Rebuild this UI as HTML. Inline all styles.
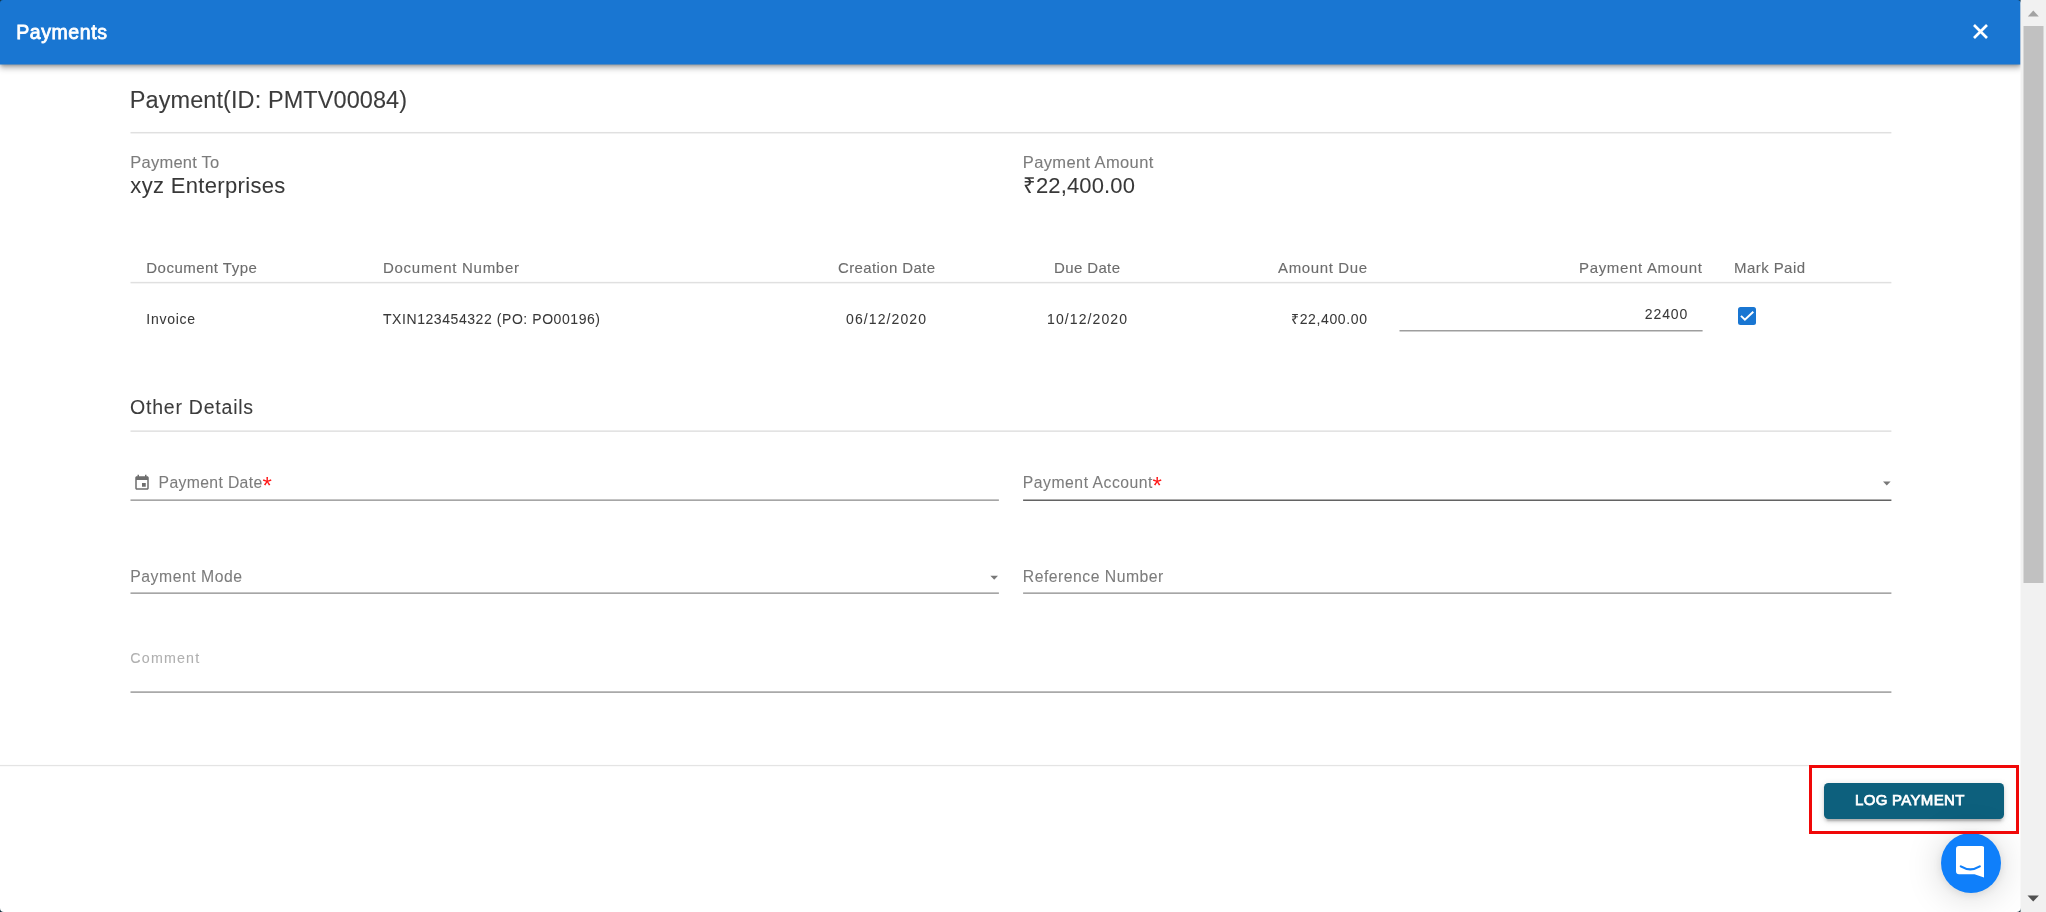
<!DOCTYPE html>
<html lang="en">
<head>
<meta charset="utf-8">
<title>Payments</title>
<style>
html,body{margin:0;padding:0;overflow:hidden;}
body{width:2046px;height:912px;overflow:hidden;background:#fff;position:relative;
  font-family:"Liberation Sans",sans-serif;-webkit-font-smoothing:antialiased;}
.t{position:absolute;white-space:nowrap;line-height:1;filter:blur(0.5px);-webkit-text-stroke:0.3px;}
.abs{position:absolute;}
/* header bar */
#bar{position:absolute;left:0;top:0;width:2021px;height:65px;z-index:5;}
#barbg{position:absolute;left:0;top:0;width:2021px;height:65px;background:#1976d2;transform:translate(-0.5px,-0.5px);
  box-shadow:0 3px 6px rgba(0,0,0,.30),0 1px 3px rgba(0,0,0,.20);}
/* scrollbar */
#sb{position:absolute;left:2021px;top:0;width:26px;height:912px;background:#f1f1f1;z-index:6;transform:translateX(-0.5px);}
#sb .thumb{position:absolute;left:3.3px;top:25.6px;width:19.4px;height:557.4px;background:#c1c1c1;}
#sb svg{position:absolute;left:0;}
/* footer */
#redbox{position:absolute;left:1809.2px;top:765.2px;width:203.5px;height:63.3px;border:3px solid #f00808;z-index:4;}
#btn{position:absolute;left:1824px;top:783px;width:180px;height:36px;background:#0d607d;border-radius:4.5px;border:0;padding:0;margin:0;font-family:inherit;
  box-shadow:0 4.5px 1.5px -3px rgba(0,0,0,.14),0 3px 3px 0 rgba(0,0,0,.12),0 1.5px 7.5px 0 rgba(0,0,0,.12);}
#chat{position:absolute;left:1941px;top:833px;width:60px;height:60px;border-radius:50%;background:#0f7ffa;
  box-shadow:0 1.5px 9px rgba(0,0,0,.09),0 3px 36px rgba(0,0,0,.17);}
</style>
</head>
<body>

<!-- dialog title bar -->
<header id="bar">
  <div id="barbg"></div>
  <div class="t" style="left:16.2px;top:22.79px;font-size:19.5px;letter-spacing:0.58px;color:#fff;-webkit-text-stroke:0.8px #fff">Payments</div>
  <svg class="abs" style="left:1971px;top:22px" width="19" height="19" viewBox="0 0 19 19"><path d="M3 3 L16 16 M16 3 L3 16" stroke="#fff" stroke-width="2.7" fill="none"/></svg>
</header>

<main>

<!-- rules and underlines -->
<svg class="abs" style="left:0;top:0" width="2021" height="912" viewBox="0 0 2021 912">
  <!-- section rules -->
  <rect x="130.5" y="131.95" width="1760.9" height="1.5" fill="#e0e0e0"/>
  <rect x="130.5" y="281.85" width="1760.9" height="1.5" fill="#e0e0e0"/>
  <rect x="130.5" y="430.4" width="1760.9" height="1.5" fill="#e0e0e0"/>
  <!-- field underlines -->
  <rect x="1399.5" y="330.0" width="303.1" height="1.5" fill="#9e9e9e"/>
  <rect x="130.5" y="499.45" width="868.4" height="1.38" fill="#949494"/>
  <rect x="1023.1" y="499.5" width="868.3" height="1.45" fill="#5c5c5c"/>
  <rect x="130.5" y="592.45" width="868.4" height="1.38" fill="#949494"/>
  <rect x="1023.1" y="592.45" width="868.3" height="1.38" fill="#949494"/>
  <rect x="130.5" y="691.4" width="1760.9" height="1.4" fill="#949494"/>
  <!-- footer divider -->
  <rect x="0" y="764.9" width="1809.5" height="1.3" fill="#e4e4e4"/>
</svg>

<section>
<!-- payment summary -->
<div class="t" style="left:129.8px;top:89.11px;font-size:23.5px;letter-spacing:0.08px;color:#3c3c3c;-webkit-text-stroke:0.08px">Payment(ID: PMTV00084)</div>

<div class="t" style="left:130.3px;top:153.93px;font-size:16.5px;letter-spacing:0.23px;color:#7c7c7c;-webkit-text-stroke:0.1px">Payment To</div>
<div class="t" style="left:130.3px;top:174.68px;font-size:22px;letter-spacing:0.329px;color:#383838;-webkit-text-stroke:0.05px">xyz Enterprises</div>
<div class="t" style="left:1022.8px;top:153.93px;font-size:16.5px;letter-spacing:0.373px;color:#7c7c7c;-webkit-text-stroke:0.1px">Payment Amount</div>
<div class="t" style="left:1022.8px;top:174.68px;font-size:22px;letter-spacing:0.136px;color:#383838;-webkit-text-stroke:0.05px">₹22,400.00</div>

</section>

<section>
<!-- documents table -->
<div class="t" style="left:146.3px;top:259.5px;font-size:15px;letter-spacing:0.477px;color:#6c6c6c;-webkit-text-stroke:0.12px">Document Type</div>
<div class="t" style="left:383px;top:259.5px;font-size:15px;letter-spacing:0.722px;color:#6c6c6c;-webkit-text-stroke:0.12px">Document Number</div>
<div class="t" style="left:838px;top:259.5px;font-size:15px;letter-spacing:0.37px;color:#6c6c6c;-webkit-text-stroke:0.12px">Creation Date</div>
<div class="t" style="left:1054px;top:259.5px;font-size:15px;letter-spacing:0.375px;color:#6c6c6c;-webkit-text-stroke:0.12px">Due Date</div>
<div class="t" style="left:1278px;top:259.5px;font-size:15px;letter-spacing:0.623px;color:#6c6c6c;-webkit-text-stroke:0.12px">Amount Due</div>
<div class="t" style="left:1579px;top:259.5px;font-size:15px;letter-spacing:0.674px;color:#6c6c6c;-webkit-text-stroke:0.12px">Payment Amount</div>
<div class="t" style="left:1734px;top:259.5px;font-size:15px;letter-spacing:0.434px;color:#6c6c6c;-webkit-text-stroke:0.12px">Mark Paid</div>

<div class="t" style="left:146.3px;top:311.95px;font-size:14px;letter-spacing:0.74px;color:#383838;-webkit-text-stroke:0.05px">Invoice</div>
<div class="t" style="left:383px;top:311.95px;font-size:14px;letter-spacing:0.564px;color:#383838;-webkit-text-stroke:0.05px">TXIN123454322 (PO: PO00196)</div>
<div class="t" style="left:846px;top:311.95px;font-size:14px;letter-spacing:1.102px;color:#383838;-webkit-text-stroke:0.05px">06/12/2020</div>
<div class="t" style="left:1047px;top:311.95px;font-size:14px;letter-spacing:1.102px;color:#383838;-webkit-text-stroke:0.05px">10/12/2020</div>
<div class="t" style="left:1291px;top:311.95px;font-size:14px;letter-spacing:0.634px;color:#383838;-webkit-text-stroke:0.05px">₹22,400.00</div>
<div class="t" style="left:1644.8px;top:307.35px;font-size:14px;letter-spacing:0.891px;color:#383838;-webkit-text-stroke:0.05px">22400</div>
<!-- checkbox -->
<svg class="abs" style="left:1737.7px;top:306.9px" width="18" height="18" viewBox="0 0 18 18"><rect x="0" y="0" width="18" height="18" rx="2.5" fill="#1976d2"/><path d="M3.0 8.9 L6.9 12.7 L15.3 4.8" stroke="#fff" stroke-width="2" fill="none"/></svg>

</section>

<section>
<!-- other details -->
<div class="t" style="left:130px;top:398.49px;font-size:19.5px;letter-spacing:0.775px;color:#3c3c3c;-webkit-text-stroke:0.08px">Other Details</div>

<!-- payment date -->
<svg class="abs" style="left:132.5px;top:474px" width="18" height="18" viewBox="0 0 24 24"><path fill="#6e6e6e" d="M17 12h-5v5h5v-5zM16 1v2H8V1H6v2H5c-1.11 0-1.99.9-1.99 2L3 19c0 1.1.89 2 2 2h14c1.1 0 2-.9 2-2V5c0-1.1-.9-2-2-2h-1V1h-2zm3 18H5V8h14v11z"/></svg>
<div class="t" style="left:158.6px;top:474.97px;font-size:15.75px;letter-spacing:0.344px;color:#7c7c7c;-webkit-text-stroke:0.08px">Payment Date</div>
<div class="t" style="left:262.6px;top:474px;font-size:24px;color:#ff1a1a;-webkit-text-stroke:0">*</div>

<!-- payment account -->
<div class="t" style="left:1022.8px;top:474.97px;font-size:15.75px;letter-spacing:0.509px;color:#7c7c7c;-webkit-text-stroke:0.08px">Payment Account</div>
<div class="t" style="left:1152.4px;top:474px;font-size:24px;color:#ff1a1a;-webkit-text-stroke:0">*</div>
<svg class="abs" style="left:1880px;top:478px" width="14" height="10" viewBox="0 0 14 10"><path d="M3 3.4 H10.6 L6.8 7.5 Z" fill="#787878"/></svg>

<!-- payment mode -->
<div class="t" style="left:130.3px;top:568.67px;font-size:15.75px;letter-spacing:0.524px;color:#7c7c7c;-webkit-text-stroke:0.08px">Payment Mode</div>
<svg class="abs" style="left:987px;top:572px" width="14" height="10" viewBox="0 0 14 10"><path d="M3.4 3.7 H11 L7.2 7.8 Z" fill="#787878"/></svg>

<!-- reference number -->
<div class="t" style="left:1022.8px;top:568.67px;font-size:15.75px;letter-spacing:0.496px;color:#7c7c7c;-webkit-text-stroke:0.08px">Reference Number</div>

<!-- comment -->
<div class="t" style="left:130.3px;top:650.94px;font-size:14.25px;letter-spacing:1.186px;color:#b0b0b0;-webkit-text-stroke:0.1px">Comment</div>

</section>
</main>

<!-- footer -->
<footer>
<div id="redbox"></div>
<button id="btn" type="button"><span class="t" style="left:31px;top:8.9px;font-size:15px;letter-spacing:0.32px;color:#fff;-webkit-text-stroke:0.75px #fff">LOG PAYMENT</span></button>
</footer>

<!-- chat launcher -->
<div id="chat">
  <svg class="abs" style="left:14.9px;top:13px" width="28.5" height="31.6" viewBox="0 0 28.5 31.6"><path fill="#fff" d="M3 0 H25.5 a3 3 0 0 1 3 3 V31.6 L18.5 28.3 H3 a3 3 0 0 1 -3 -3 V3 a3 3 0 0 1 3 -3 Z"/><path d="M4.8 20.4 Q14.3 26.2 23.8 20.4" stroke="#0f7ffa" stroke-width="2.2" fill="none" stroke-linecap="round"/></svg>
</div>

<!-- dialog rounded corners (dark page backdrop showing through) -->
<svg class="abs" style="left:0;top:0;z-index:7" width="2021" height="912" viewBox="0 0 2021 912">
  <path d="M0 0 H3 A3 3 0 0 0 0 3 Z" fill="#123240"/>
  <path d="M2020.5 0 h-3 a3 3 0 0 1 3 3 Z" fill="#123240"/>
  <path d="M0 912 v-4 a4 4 0 0 0 4 4 Z" fill="#123240"/>
  <path d="M2020.5 912 h-4 a4 4 0 0 0 4 -4 Z" fill="#123240"/>
</svg>

<!-- browser scrollbar -->
<div id="sb">
  <svg style="top:0" width="26" height="26" viewBox="0 0 26 26"><path d="M7.3 16.4 L12.8 10.4 L18.3 16.4 Z" fill="#a3a3a3"/></svg>
  <div class="thumb"></div>
  <svg style="top:886px" width="26" height="26" viewBox="0 0 26 26"><path d="M7.0 9.5 L12.7 15.6 L18.4 9.5 Z" fill="#505050"/></svg>
</div>

</body>
</html>
